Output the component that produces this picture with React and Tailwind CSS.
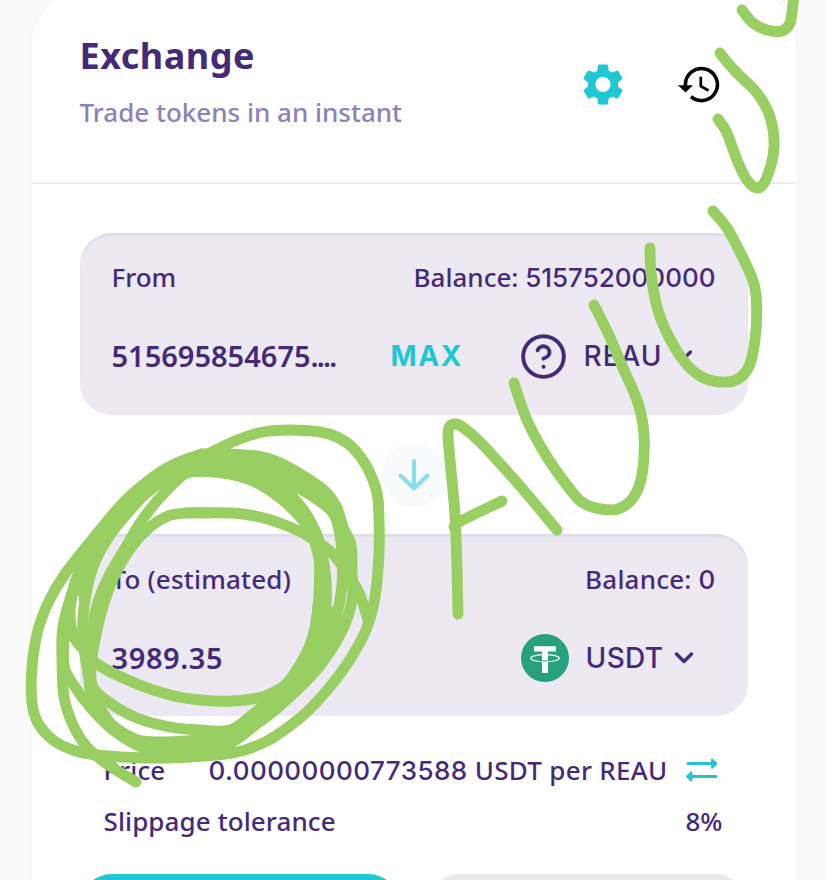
import React from 'react';
import { MdSettings } from 'react-icons/md';

const STROKES = [
  // circled amount: outermost loop running into the top band
  [[210,513],[185,513],[168,516],[150,527],[130,549],[113,579],[102,610],[95,640],[91,667],[92,690],[103,713],[117,730],[137,740],[163,742],[200,740],[232,738],[258,720],[285,697],[307,670],[321,640],[326,605],[326,580],[322,553],[315,530],[298,503],[272,481],[240,468],[205,463],[185,468],[160,483],[135,503],[100,541],[84,565],[73,590],[63,627],[62,660],[64,697],[73,725],[87,747],[107,764],[136,782]],
  [[190,513],[233,513],[260,517],[285,525],[308,536],[332,553],[350,577],[360,595],[368,620]],
  [[202,454],[179,462],[156,475],[124,502],[91,541],[65,574],[49,601],[38,630],[32,667],[32,703],[38,723],[53,740],[73,750],[97,755],[147,758],[190,757],[233,753],[267,741],[300,718],[323,695],[347,664],[366,630],[375,597],[379,553],[379,520],[377,493],[367,467],[353,448],[337,437],[320,432],[290,430],[263,432],[237,440],[204,456]],
  [[202,454],[227,454],[257,456],[278,462],[307,478],[326,492],[337,508],[343,527],[351,545],[352,570],[352,600],[342,631],[319,667],[297,690],[260,721],[232,742],[200,750],[170,754],[143,748],[113,730],[90,707],[75,687],[64,665],[66,625],[76,580],[91,548]],
  [[177,480],[190,472],[223,473],[253,481],[280,498],[301,518],[312,535],[319,560],[319,593],[315,628],[305,659],[293,679],[265,696],[233,701],[200,700],[170,695],[137,684],[100,666],[87,653],[74,637],[70,610],[76,580]],
  [[177,480],[157,501],[140,523],[127,545],[110,574],[98,602],[92,630],[90,660],[93,687],[110,703],[137,718],[170,727],[200,730],[230,730],[253,714],[273,697],[292,677],[312,640],[319,600]],
  [[200,461],[240,465],[265,472],[290,484],[312,496],[333,513],[340,535],[342,560],[342,585],[337,615],[328,645],[314,670],[297,690],[262,720],[230,736],[200,741]],
  [[240,460],[270,467],[298,480],[322,495]],
  [[174,472],[152,487],[126,515],[108,538],[93,567],[84,607],[83,640],[88,673],[93,700],[112,725],[142,742],[172,748],[230,746]],
  [[328,610],[322,645],[308,672],[290,694],[262,712]],
  [[87,565],[79,590],[86,572],[84,600]],
  // A
  [[458,614],[457,570],[455,515],[450,460],[448,434],[450,426],[455,424],[461,426],[480,442],[520,486],[557,530]],
  [[454,527],[461,521],[502,501]],
  // U shapes
  [[514,383],[527,420],[547,457],[573,493],[585,504],[601,509],[618,509],[633,498],[642,475],[644,435],[638,403],[623,368],[608,333],[594,305]],
  [[650,248],[651,273],[657,307],[667,333],[683,360],[700,376],[720,382],[738,379],[750,364],[756,330],[756,295],[752,278],[740,252],[727,228],[713,211]],
  [[718,119],[727,133],[737,160],[747,180],[758,188],[767,177],[774,147],[770,117],[757,93],[737,73],[727,62],[720,53]],
  [[742,10],[753,23],[767,30],[782,31],[790,23],[793,4],[794,-12]],
];

function smooth(p) {
  let d = `M${p[0][0]} ${p[0][1]}`;
  for (let i = 0; i < p.length - 1; i++) {
    const a = p[i - 1] || p[i];
    const b = p[i];
    const c = p[i + 1];
    const e = p[i + 2] || c;
    d += `C${b[0] + (c[0] - a[0]) / 6} ${b[1] + (c[1] - a[1]) / 6} ${c[0] - (e[0] - b[0]) / 6} ${c[1] - (e[1] - b[1]) / 6} ${c[0]} ${c[1]}`;
  }
  return d;
}

function Scribbles() {
  return (
    <svg className="pointer-events-none absolute inset-0" width="827" height="880" viewBox="0 0 827 880" fill="none" stroke="#99ce62" strokeWidth="10.9" strokeLinecap="round" strokeLinejoin="round">
      {STROKES.map((s, i) => <path key={i} d={smooth(s)} />)}
    </svg>
  );
}

function HistoryIcon() {
  return (
    <svg className="overflow-visible" width="42" height="40" viewBox="0 0 42 40" fill="none" stroke="#000">
      <path d="M7.4 21.5V20.3A16 16 0 1 1 13 32.2" strokeWidth="3.6" />
      <path d="M0 20.7H15L7.5 28Z" fill="#000" stroke="none" />
      <path d="M22.8 12.3V21.7L30.5 26" strokeWidth="2.7" />
    </svg>
  );
}

function HelpIcon() {
  return (
    <svg width="49" height="49" viewBox="0 0 24 24" fill="none" stroke="#452a7a" strokeWidth="1.9" strokeLinecap="round" strokeLinejoin="round">
      <circle cx="12" cy="12" r="9.95" />
      <path d="M9.09 9a3 3 0 0 1 5.83 1c0 2-3 3-3 3" />
      <path d="M12 17h.01" />
    </svg>
  );
}

function TetherIcon() {
  return (
    <svg width="48" height="48" viewBox="0 0 48 48">
      <circle cx="24" cy="24" r="24" fill="#26a17b" />
      <path d="M13 12.2H35V17.6H27V39H21V17.6H13Z" fill="#fff" />
      <ellipse cx="24" cy="24.2" rx="14.2" ry="3.6" fill="none" stroke="#fff" strokeWidth="1.2" />
      <path d="M20.5 26.6Q24 27.6 27.5 26.6" fill="none" stroke="#26a17b" strokeWidth="1" />
    </svg>
  );
}

function Chevron() {
  return (
    <svg width="20" height="14" viewBox="0 0 20 14" fill="none" stroke="#452a7a" strokeWidth="3.4" strokeLinecap="round" strokeLinejoin="round">
      <path d="M2.5 3L10 10.5L17.5 3" />
    </svg>
  );
}

function SwapIcon() {
  return (
    <svg width="34" height="26" viewBox="0 0 34 26" fill="none" stroke="#27c1d3" strokeWidth="3" strokeLinecap="round">
      <path d="M3 6.5H28M6 19.5H31" />
      <path d="M27 2.3L31.5 6.5L27 10.8ZM6.5 15.2L2 19.5L6.5 23.8Z" fill="#27c1d3" strokeWidth="1.8" strokeLinejoin="round" />
    </svg>
  );
}

function Panel({ children }) {
  return (
    <div className="h-[182px] w-[668px] rounded-[32px] bg-[#ece9f3] px-8 pt-6 shadow-[inset_0_3px_3px_-1px_rgba(74,74,104,0.1)]">
      {children}
    </div>
  );
}

export default function App() {
  return (
    <div className="relative h-[880px] w-[827px] overflow-hidden bg-[#fafafa] font-['Noto_Sans',sans-serif] text-[26px] leading-10 font-medium whitespace-nowrap text-[#452a7a]">
      <main className="-mt-4 ml-[31.5px] h-[960px] w-[764px] rounded-[64px] bg-white shadow-[0_0_8px_rgba(0,0,0,0.025)]">
        <header className="flex h-[200px] justify-between border-b-2 border-[#ececee] pr-[76px] pl-12">
          <div className="pt-[50px]">
            <h1 className="text-[36px] leading-[44px] font-bold tracking-[0.5px]">Exchange</h1>
            <p className="mt-[14px] text-[#8f80ba]">Trade tokens in an instant</p>
          </div>
          <div className="flex h-12 translate-y-[76.5px] items-center gap-[50px]">
            <MdSettings size={50} color="#1fc7d4" />
            <HistoryIcon />
          </div>
        </header>

        <section className="flex flex-col pt-[49px] pl-12">
          <Panel>
            <div className="flex h-10 justify-between">
              <span>From</span>
              <span>Balance: <span className="font-['Inter',sans-serif]">515752000000</span></span>
            </div>
            <div className="mt-[35px] flex h-12 items-center">
              <span className="w-[279px] text-[29px] font-semibold">515695854675<span className="tracking-[-1.8px]">....</span></span>
              <span className="w-[128px] font-['Inter',sans-serif] text-[28px] font-bold tracking-[1.6px] text-[#1fc7d4]">MAX</span>
              <HelpIcon />
              <span className="ml-4 w-[89px] font-['Inter',sans-serif] text-[28px] tracking-[1px]">REAU</span>
              <Chevron />
            </div>
          </Panel>

          <div className="my-[27.5px] ml-[302px] flex size-16 items-center justify-center rounded-full bg-[#f8fafb]">
            <svg width="34" height="36" viewBox="0 0 34 36" fill="none" stroke="#86e0e9" strokeWidth="4" strokeLinecap="round" strokeLinejoin="round">
              <path d="M17 4V31.5M3.5 18.5L17 31.5L30.5 18.5" />
            </svg>
          </div>

          <Panel>
            <div className="mt-px flex h-10 justify-between">
              <span className="tracking-[0.2px]">To (estimated)</span>
              <span className="tracking-[0.2px]">Balance: <span className="font-['Inter',sans-serif]">0</span></span>
            </div>
            <div className="mt-[35px] flex h-12 items-center">
              <span className="w-[409px] text-[29px] font-semibold tracking-[0.6px]">3989.35</span>
              <TetherIcon />
              <span className="ml-[17px] w-[88px] font-['Inter',sans-serif] text-[28px] tracking-[0.4px]">USDT</span>
              <Chevron />
            </div>
          </Panel>

          <div className="mt-[34px] ml-6 flex h-10 items-center">
            <span className="w-[105px]">Price</span>
            <span className="w-[476px]"><span className="font-['Inter',sans-serif] tracking-[0.45px]">0.00000000773588</span><span className="tracking-[0.3px]"> USDT per REAU</span></span>
            <SwapIcon />
          </div>
          <div className="mt-[11px] ml-6 flex h-10 w-[619px] justify-between">
            <span className="tracking-[0.1px]">Slippage tolerance</span>
            <span>8%</span>
          </div>
          <div className="mt-[33px] flex gap-7">
            <div className="h-24 w-80 rounded-[32px] bg-[#1fc7d4]" />
            <div className="h-24 w-80 rounded-[32px] bg-[#e9eaeb]" />
          </div>
        </section>
      </main>
      <Scribbles />
    </div>
  );
}
